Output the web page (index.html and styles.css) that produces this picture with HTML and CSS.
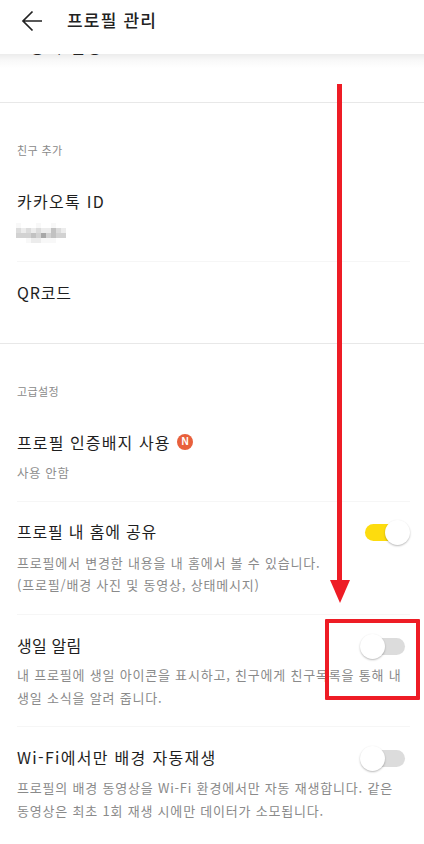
FILE: index.html
```html
<!DOCTYPE html>
<html lang="ko">
<head>
<meta charset="utf-8">
<title>프로필 관리</title>
<link rel="stylesheet" href="styles.css">
</head>
<body>
<div class="screen">
  <header class="topbar">
    <svg class="back" width="22" height="22" viewBox="0 0 22 22" fill="none" stroke="#222" stroke-width="1.7"><path d="M21 11H2M11.5 1.5L2 11l9.500 9.500"/></svg>
    <h1 class="page-title">프로필 관리</h1>
  </header>
  <div class="shade">
    <div class="clipped"><span>공개 설정</span></div>
  </div>
  <section class="group">
    <div class="label">친구 추가</div>
    <div class="row row-a">
      <div class="title wide">카카오톡 ID</div>
      <div class="mosaic">
        <i class="b"></i><i class="a"></i><i class="a"></i><i class="a"></i><i class="b"></i><i class="a"></i><i class="a"></i><i class="b"></i><i class="a"></i><i class="a"></i>
        <i class="d"></i><i class="c"></i><i class="d"></i><i class="c"></i><i class="d"></i><i class="c"></i><i class="c"></i><i class="f"></i><i class="d"></i><i class="c"></i>
        <i class="e"></i><i class="e"></i><i class="e"></i><i class="f"></i><i class="e"></i><i class="g"></i><i class="e"></i><i class="f"></i><i class="e"></i><i class="e"></i>
        <i class="a"></i><i class="a"></i><i class="b"></i><i class="c"></i><i class="c"></i><i class="b"></i><i class="b"></i><i class="b"></i><i class="a"></i><i class="a"></i>
      </div>
    </div>
    <div class="row row-qr">
      <div class="title">QR코드</div>
    </div>
  </section>
  <section class="group-last">
    <div class="label">고급설정</div>
    <div class="row row-a">
      <div class="title badge-line">프로필 인증배지 사용 <span class="badge">N</span></div>
      <div class="sub">사용 안함</div>
    </div>
    <div class="row row-b">
      <div class="head">
        <div class="title">프로필 내 홈에 공유</div>
        <span class="toggle on"></span>
      </div>
      <p class="desc">프로필에서 변경한 내용을 내 홈에서 볼 수 있습니다.<br>(프로필/배경 사진 및 동영상, 상태메시지)</p>
    </div>
    <div class="row row-c">
      <div class="head">
        <div class="title narrow">생일 알림</div>
        <span class="toggle"></span>
      </div>
      <p class="desc">내 프로필에 생일 아이콘을 표시하고, 친구에게 친구목록을 통해 내<br>생일 소식을 알려 줍니다.</p>
    </div>
    <div class="row row-d">
      <div class="head">
        <div class="title wide">Wi-Fi에서만 배경 자동재생</div>
        <span class="toggle"></span>
      </div>
      <p class="desc">프로필의 배경 동영상을 Wi-Fi 환경에서만 자동 재생합니다. 같은<br>동영상은 최초 1회 재생 시에만 데이터가 소모됩니다.</p>
    </div>
  </section>
  <div class="arrow-line"></div>
  <div class="arrow-head"></div>
  <div class="callout"></div>
</div>
</body>
</html>
```
FILE: styles.css
```css
* { box-sizing: border-box; }
html, body { margin: 0; padding: 0; }
body { background: #fff; font-family: "Noto Sans CJK KR", "Noto Sans", sans-serif; color: #222; }
.screen { position: relative; width: 424px; height: 844px; overflow: hidden; background: #fff; }

.topbar { display: flex; align-items: center; height: 54px; padding: 0 0 13px 21px; gap: 24px; background: #fff; }
.page-title { margin: -2px 0 0; font-size: 17px; line-height: 24px; font-weight: 500; letter-spacing: 1.2px; color: #222; }
.back { flex: none; }

.shade { height: 48px; background: linear-gradient(#ececec 0, #f8f8f8 6px, #fff 14px); }
.clipped { height: 4px; margin-left: 30px; overflow: hidden; font-size: 16px; line-height: 24px; letter-spacing: 2px; }
.clipped span { display: block; margin-top: -20px; }

.group { border-top: 1px solid #e8e8e8; border-bottom: 1px solid #e8e8e8; padding-top: 39px; height: 242px; }
.group-last { padding-top: 39px; }

.label { margin-left: 17px; font-size: 11px; line-height: 16px; color: #8a8a8a; letter-spacing: .4px; }

.row { margin: 0 14px 0 17px; border-bottom: 1px solid #f6f6f6; }
.row-a { padding: 31px 0 19px; }
.row-qr { padding-top: 18px; border-bottom: 0; }
.row-b { padding: 17px 0 18px; }
.row-c { padding: 18px 0 17px; }
.row-d { padding: 18px 0 0; border-bottom: 0; }

.title { font-size: 16px; line-height: 24px; color: #1e1e1e; letter-spacing: .8px; }
.title.wide { letter-spacing: 1.3px; }
.title.narrow { letter-spacing: .2px; }
.sub { margin-top: 10px; font-size: 12.5px; line-height: 18px; color: #8e8e8e; letter-spacing: .6px; }
.desc { margin: 7px 0 0; font-size: 13px; line-height: 23px; color: #8a8a8a; letter-spacing: .8px; white-space: nowrap; }
.row-b .desc { margin-top: 9px; line-height: 22px; }
.row-c .desc { margin-top: 6px; }

.head { display: flex; justify-content: space-between; align-items: center; }

.badge-line { display: flex; align-items: center; gap: 1px; white-space: pre; letter-spacing: 1.1px; }
.badge { display: inline-flex; align-items: center; justify-content: center; width: 16px; height: 16px; border-radius: 50%; background: #e8603c; color: #fff; font-size: 10px; font-weight: 700; letter-spacing: 0; font-family: "Liberation Sans", sans-serif; }

.toggle { position: relative; flex: none; display: block; width: 40px; height: 17px; margin: 2px 5px 0 0; border-radius: 9px; background: #dcdcdc; }
.toggle::after { content: ""; position: absolute; left: -5px; top: -4px; width: 25px; height: 25px; border-radius: 50%; background: #fff; box-shadow: 0 1px 2px rgba(0,0,0,.28); }
.toggle.on { background: #fddc0e; }
.toggle.on::after { left: 20px; }

.mosaic { display: grid; grid-template-columns: repeat(10, 5px); grid-auto-rows: 5px; margin-top: 10px; height: 19px; margin-left: -1px; }
.mosaic i { display: block; }
.mosaic .a { background: #fff; }
.mosaic .b { background: #f8f8f8; }
.mosaic .c { background: #ececec; }
.mosaic .d { background: #dcdcdc; }
.mosaic .e { background: #d2d2d2; }
.mosaic .f { background: #c2c2c2; }
.mosaic .g { background: #a8a8a8; }

.arrow-line { position: absolute; left: 337px; top: 84px; width: 5px; height: 498px; background: #ee1c25; }
.arrow-head { position: absolute; left: 330px; top: 580px; width: 0; height: 0; border-left: 10px solid transparent; border-right: 10px solid transparent; border-top: 23px solid #ee1c25; }
.callout { position: absolute; left: 325px; top: 619px; width: 95px; height: 81px; border: 4px solid #ee1c25; border-radius: 1px; }
```
